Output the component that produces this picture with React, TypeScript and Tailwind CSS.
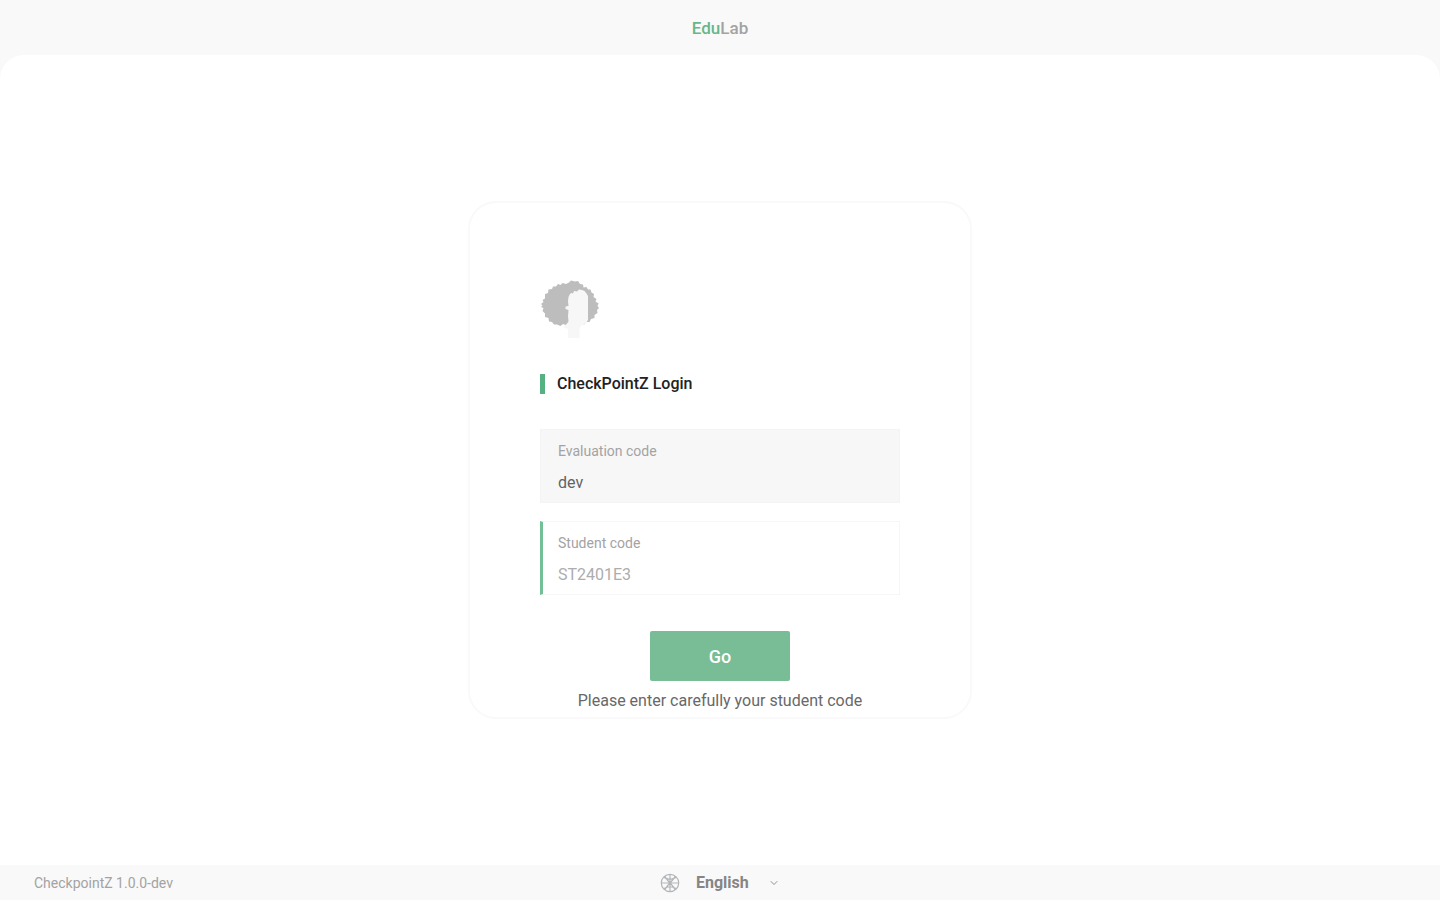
import React from "react";
import { ChevronDown } from "lucide-react";

function TreeLogo() {
  return (
    <svg viewBox="0 0 60 60" className="size-[60px]" role="img" aria-label="Tree">
      <path
        fill="#bdbdbd"
        d="M1 25L3.500 23 2.500 21 5 19.500 5 15 8 14 8.500 10.500 12 10 13 7.500 16 7.500 18 5 20.500 6 22.500 4 26 5 29 3.500 31 1.500 35 2.500 38 2 40 5 43 5.500 43.500 8.500 46.500 8 48 10.500 50.500 10.500 51.500 13.500 54 15 53.500 18 56.500 20 55.500 22.500 58.500 24.500 57.500 27 59 29 57 31 57.500 34 54.500 36 54.500 39 51 40 49.500 43 46.500 43 44 45.500 41 44 28 43.500 26 46 23 45 20.500 47 17 45.500 14 45.500 12 43 9 42.500 8.500 39 5 38 5 34.500 2.500 32 3.500 29 1 28 2.500 26.500z"
      />
      <path
        fill="#f7f7f7"
        d="M28.500 18L30 15 31.500 14 33 14.500 34 12 37 12.500 39 10.500 42 11 44.500 12 46.500 14.500 48 17V41L46 44 42 46 39.500 49V59H28V50L23 48 26.500 45.500 28.500 42.500 28 37 28.500 31 25.500 30V27.500L28.500 27 28 22z"
      />
    </svg>
  );
}

function GlobeIcon() {
  return (
    <svg
      viewBox="0 0 20 20"
      className="size-5 text-[#b3b6b8]"
      fill="none"
      stroke="currentColor"
      strokeWidth="1.2"
      aria-hidden="true"
    >
      <circle cx="10" cy="10" r="8.7" />
      <path d="M10 1.300v17.400M1.300 10h17.400M5 3c1 4.500 9 9.500 10 14M15 3c-1 4.500-9 9.500-10 14M3.800 4.300c3.500 2.600 8.900 2.600 12.400 0M3.800 15.700c3.500-2.600 8.900-2.600 12.400 0" />
    </svg>
  );
}

export default function App() {
  return (
    <div className="flex min-h-screen flex-col bg-[#f9f9f9] font-['Roboto',sans-serif]">
      <header className="flex h-[55px] items-center justify-center pt-[2px] text-[17px] font-medium">
        <span className="text-[#66b78b]">Edu</span>
        <span className="text-[#a3a3a3]">Lab</span>
      </header>

      <main className="flex flex-1 items-center justify-center rounded-t-3xl bg-white">
        <form
          className="flex w-full max-w-[504px] flex-col rounded-[28px] border-2 border-[#f9f9f9] px-[70px] pt-[76px] pb-1"
          onSubmit={(event) => event.preventDefault()}
        >
          <TreeLogo />
          <h1 className="mt-[35px] flex h-5 items-center gap-3 text-base font-medium text-[#222222]">
            <span className="h-5 w-[5px] bg-[#55b181]" />
            CheckPointZ Login
          </h1>

          <div className="mt-[35px] flex h-[74px] flex-col gap-[10px] border border-[#f4f4f4] bg-[#f7f7f7] px-[17px] pt-[11px]">
            <label htmlFor="evaluation" className="text-sm leading-5 text-[#a3a3a3]">
              Evaluation code
            </label>
            <input
              id="evaluation"
              defaultValue="dev"
              readOnly
              className="h-6 w-full bg-transparent text-base text-[#626262] outline-none"
            />
          </div>

          <div className="mt-[18px] flex h-[74px] flex-col gap-[10px] border border-l-3 border-[#f6f6f6] border-l-[#74c096] pr-[17px] pl-[15px] pt-[11px]">
            <label htmlFor="student" className="text-sm leading-5 text-[#a3a3a3]">
              Student code
            </label>
            <input
              id="student"
              placeholder="ST2401E3"
              className="h-6 w-full bg-transparent text-base text-[#626262] outline-none placeholder:text-[#adadad]"
            />
          </div>

          <button
            type="submit"
            className="mt-9 h-[50px] w-[140px] self-center rounded-xs bg-[#78bd95] pt-[2px] text-lg font-medium text-white"
          >
            Go
          </button>
          <p className="mt-2 text-center text-base leading-6 whitespace-nowrap text-[#686868]">
            Please enter carefully your student code
          </p>
        </form>
      </main>

      <footer className="grid h-[35px] grid-cols-3 items-center px-[34px]">
        <span className="text-sm text-[#a3a3a3]">CheckpointZ 1.0.0-dev</span>
        <div className="flex items-center justify-center gap-4">
          <GlobeIcon />
          <div className="grid items-center">
            <select
              aria-label="Language"
              className="col-start-1 row-start-1 w-[84px] appearance-none bg-transparent text-base font-bold text-[#858585] outline-none"
            >
              <option>English</option>
            </select>
            <ChevronDown
              className="pointer-events-none col-start-1 row-start-1 size-3 justify-self-end text-[#929292]"
              aria-hidden="true"
            />
          </div>
        </div>
      </footer>
    </div>
  );
}
